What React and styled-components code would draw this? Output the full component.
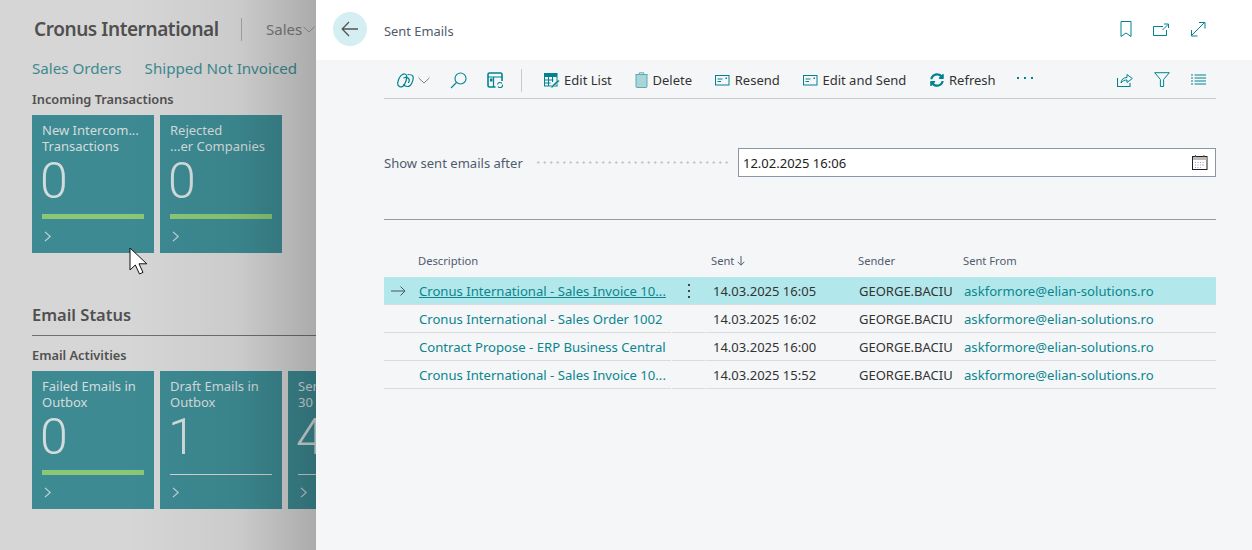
import React from 'react'
import styled, { createGlobalStyle } from 'styled-components'
import { FaSyncAlt } from 'react-icons/fa'

const TEAL = '#00838f'
const FONT = '"Noto Sans", "Open Sans", sans-serif'

const emails = [
    { title: 'Cronus International - Sales Invoice 10...', sent: '14.03.2025 16:05', active: true },
    { title: 'Cronus International - Sales Order 1002', sent: '14.03.2025 16:02' },
    { title: 'Contract Propose - ERP Business Central', sent: '14.03.2025 16:00' },
    { title: 'Cronus International - Sales Invoice 10...', sent: '14.03.2025 15:52' },
]

const Icon = ({ w = 16, h = 16, children }) => (
    <svg width={w} height={h} viewBox={`0 0 ${w} ${h}`} fill="none" stroke={TEAL} strokeWidth="1">
        {children}
    </svg>
)

const MailIcon = () => (
    <Icon w={15} h={11}>
        <rect x=".5" y=".5" width="13.5" height="9.5" />
        <path d="M2.5 4h5M2.5 6.500h3.500" />
        <rect x="10.500" y="2.500" width="1.500" height="1.500" fill={TEAL} stroke="none" />
    </Icon>
)

function Tile({ lines, count, alert }) {
    return (
        <TileBox>
            <TileTitle>
                {lines.map(line => <div key={line}>{line}</div>)}
            </TileTitle>
            <TileCount>{count}</TileCount>
            <TileBar $alert={alert} />
            <TileChevron width="8" height="11" viewBox="0 0 8 11">
                <path d="M1 .8 6.200 5.500 1 10.200" fill="none" stroke="#c9d6d8" strokeWidth="1.100" />
            </TileChevron>
        </TileBox>
    )
}

function App() {
    return (
        <Page>
            <GlobalStyle />
            <RolePane>
                <AppBar>
                    <CompanyName>Cronus International</CompanyName>
                    <AppBarDivider />
                    <AppMenu>Sales</AppMenu>
                    <svg width="12" height="7" viewBox="0 0 12 7">
                        <path d="M.5.800 6 6l5.500-5.200" fill="none" stroke="#9b9b9b" />
                    </svg>
                </AppBar>
                <NavLinks>
                    <span>Sales Orders</span>
                    <span>Shipped Not Invoiced</span>
                </NavLinks>
                <GroupCaption>Incoming Transactions</GroupCaption>
                <TileRow>
                    <Tile lines={['New Intercom...', 'Transactions']} count="0" alert />
                    <Tile lines={['Rejected', '...er Companies']} count="0" alert />
                </TileRow>
                <SectionTitle>Email Status</SectionTitle>
                <SectionRule />
                <GroupCaption>Email Activities</GroupCaption>
                <TileRow>
                    <Tile lines={['Failed Emails in', 'Outbox']} count="0" alert />
                    <Tile lines={['Draft Emails in', 'Outbox']} count="1" />
                    <Tile lines={['Sent Emails Last', '30 Days']} count="4" />
                </TileRow>
                <PaneShade />
                <Cursor width="20" height="28" viewBox="0 0 20 28">
                    <path d="M1 1v22l5.300-5 4.200 9 3.500-1.600-4-8.600h7.800z" fill="#fff" stroke="#111" strokeWidth="1" />
                </Cursor>
            </RolePane>

            <Panel>
                <PanelHeader>
                    <BackButton>
                        <svg width="18" height="16" viewBox="0 0 18 16">
                            <path d="M17 8H1.500M8 1 1.200 8 8 15" fill="none" stroke="#555" strokeWidth="1.300" />
                        </svg>
                    </BackButton>
                    <PanelTitle>Sent Emails</PanelTitle>
                    <HeaderIcons>
                        <Icon w={14} h={16}>
                            <path d="M3 .5h10v15L8 12l-5 3.500z" />
                        </Icon>
                        <Icon w={16} h={13}>
                            <path d="M10 3.500H.5v9h13V7M9.500 7 15 1.500M11 1h4.500v4" />
                        </Icon>
                        <Icon w={16} h={16}>
                            <path d="M1.500 14.500l13-13M9 1.500h6v6M1.500 9v6h6" />
                        </Icon>
                    </HeaderIcons>
                </PanelHeader>

                <PanelBody>
                    <Toolbar>
                        <ToolGroup>
                            <CopilotButton>
                                <Icon w={17} h={15}>
                                    <path d="M5.500 1.500C7 .6 9 .8 9.500 2.500c.5 2-.5 6-2 9-1 2-3.500 3-5 2C.8 12.700.4 10.500 1 8.500 1.600 6 3.500 2.700 5.500 1.500z" strokeWidth="1.200" />
                                    <path d="M10.500 1.500c2 0 4.500 0 5.300 1.500.8 1.700.2 4.500-.8 6.700-1 2.300-3 4-5 3.800-1.600-.2-3-1-3.500-2.500M6.500 5c1.500-.7 4-.5 5 .5 1 1 .8 3-.2 4.500" strokeWidth="1.200" />
                                </Icon>
                                <svg width="12" height="7" viewBox="0 0 12 7">
                                    <path d="M.5.800 6 6l5.500-5.200" fill="none" stroke="#7c8490" />
                                </svg>
                            </CopilotButton>
                            <Icon w={17} h={17}>
                                <circle cx="10.500" cy="6.500" r="5.500" strokeWidth="1.100" />
                                <path d="M6.500 10.500 1 16" strokeWidth="1.100" />
                            </Icon>
                            <Icon w={16} h={16}>
                                <path d="M8.500 15H2.500A1.500 1.500 0 0 1 1 13.500v-11A1.500 1.500 0 0 1 2.500 1h11A1.500 1.500 0 0 1 15 2.500V9" strokeWidth="1.600" />
                                <path d="M1 5h14M6.500 5v10" strokeWidth="1.200" />
                                <rect x="3" y="6.500" width="2.500" height="3" fill={TEAL} stroke="none" />
                                <path d="M10.500 12.500a2.500 2.500 0 0 1 4.500-1M15.500 12.500a2.500 2.500 0 0 1-4.500 2" strokeWidth="1.100" />
                            </Icon>
                        </ToolGroup>
                        <ToolDivider />
                        <ToolButton>
                            <Icon w={16} h={15}>
                                <rect x=".5" y=".5" width="12.500" height="12.500" />
                                <rect x=".5" y=".5" width="12.500" height="3.500" fill={TEAL} stroke="none" />
                                <path d="M.5 7h9M.5 10h6M4.500 4v9M8.500 4v5" />
                                <path d="M6.500 14 14 6.500 15.700 8 8 15.200z" fill={TEAL} stroke="#f5f6f8" strokeWidth=".6" />
                            </Icon>
                            Edit List
                        </ToolButton>
                        <ToolButton>
                            <Icon w={13} h={16}>
                                <path d="M1 2.500h11v12a1 1 0 0 1-1 1H2a1 1 0 0 1-1-1z" fill="#a9d5d9" stroke="#5fa9b0" />
                                <path d="M.5 2.500h12M4.300 2.500V.8h4.400v1.700" stroke="#5fa9b0" />
                            </Icon>
                            Delete
                        </ToolButton>
                        <ToolButton><MailIcon />Resend</ToolButton>
                        <ToolButton><MailIcon />Edit and Send</ToolButton>
                        <ToolButton>
                            <RefreshIcon />
                            Refresh
                        </ToolButton>
                        <MoreDots><i /><i /><i /></MoreDots>
                        <ToolRight>
                            <Icon w={16} h={15}>
                                <path d="M.5 6v8.500h12.500V11" strokeWidth="1.100" />
                                <path d="M4 11c.3-3.500 2.500-5.500 6-5.500V2.500L15.300 6.500 10 10.500V8c-2.500 0-4.500.8-6 3z" />
                            </Icon>
                            <Icon w={16} h={15}>
                                <path d="M.7.700h14.600l-5.700 6.800v7H6.400v-7z" />
                            </Icon>
                            <Icon w={15} h={11}>
                                <path d="M3.500 1H15M3.500 4H15M3.500 7H15M3.500 10H15" />
                                <path d="M0 1h2M0 4h2M0 7h2M0 10h2" />
                            </Icon>
                        </ToolRight>
                    </Toolbar>

                    <FilterRow>
                        <FieldLabel>Show sent emails after</FieldLabel>
                        <FieldLeader />
                        <DateInput>
                            12.02.2025 16:06
                            <svg width="16" height="15" viewBox="0 0 16 15">
                                <rect x=".5" y="1.500" width="14.500" height="13" fill="#fff" stroke="#222" />
                                <rect x="1" y="2" width="13.500" height="3" fill="#bbb" />
                                <path d="M3.500 0v2" stroke="#3a55b0" />
                                <path d="M12 0v2" stroke="#a8392f" />
                                <path d="M3.500 7v1M6 7v1M8.500 7v1M11 7v1M3.500 9.500v1M6 9.500v1M8.500 9.500v1M11 9.500v1M3.500 12v1M6 12v1M8.500 12v1" stroke="#88a8d8" />
                                <path d="M6 7v1M11 9.500v1M8.500 12v1" stroke="#e2a88a" />
                            </svg>
                        </DateInput>
                    </FilterRow>
                    <FilterRule />

                    <GridHead>
                        <span />
                        <HeadCell>Description</HeadCell>
                        <span />
                        <HeadCell $indent>
                            Sent
                            <svg width="8" height="10" viewBox="0 0 8 10">
                                <path d="M4 0v9M.7 5.800 4 9.200l3.300-3.400" fill="none" stroke="#505c6d" />
                            </svg>
                        </HeadCell>
                        <HeadCell>Sender</HeadCell>
                        <HeadCell>Sent From</HeadCell>
                    </GridHead>
                    {emails.map(email => (
                        <GridRow key={email.sent} $active={email.active}>
                            <Cell>
                                {email.active && (
                                    <svg width="15" height="10" viewBox="0 0 15 10">
                                        <path d="M0 5h14M9.500.5 14 5 9.500 9.500" fill="none" stroke="#4a5560" />
                                    </svg>
                                )}
                            </Cell>
                            <LinkCell $underline={email.active}><span>{email.title}</span></LinkCell>
                            <Cell $gap>
                                {email.active && <RowMenu><i /><i /><i /></RowMenu>}
                            </Cell>
                            <Cell $gap>{email.sent}</Cell>
                            <Cell>GEORGE.BACIU</Cell>
                            <LinkCell>askformore@elian-solutions.ro</LinkCell>
                        </GridRow>
                    ))}
                </PanelBody>
            </Panel>
        </Page>
    )
}

export default App

const GlobalStyle = createGlobalStyle`
    html, body {
        margin: 0;
        padding: 0;
        overflow: hidden;
    }
    body {
        font-family: ${FONT};
    }
`

const Page = styled.div`
    display: flex;
    width: 1252px;
    height: 550px;
    overflow: hidden;
`

const RolePane = styled.div`
    position: relative;
    flex: 0 0 316px;
    box-sizing: border-box;
    padding: 17px 0 0 32px;
    overflow: hidden;
    background: #d6d6d6;
`

const PaneShade = styled.div`
    position: absolute;
    inset: 0;
    pointer-events: none;
    background: linear-gradient(to right, rgba(0, 0, 0, 0) 40%, rgba(0, 0, 0, 0.05) 75%, rgba(0, 0, 0, 0.2) 100%);
`

const Cursor = styled.svg`
    position: absolute;
    left: 129px;
    top: 247px;
`

const AppBar = styled.div`
    display: flex;
    align-items: center;
    height: 24px;
    margin-left: 2px;
    white-space: nowrap;
`

const CompanyName = styled.div`
    width: 185px;
    font-size: 19px;
    font-weight: 600;
    color: #505050;
    letter-spacing: -0.42px;
`

const AppBarDivider = styled.div`
    width: 1px;
    height: 23px;
    margin: 0 24px 0 22px;
    background: #a5a5a5;
`

const AppMenu = styled.div`
    font-size: 15px;
    color: #7b7b7b;
    margin-right: 1px;
`

const NavLinks = styled.div`
    display: flex;
    gap: 23px;
    margin-top: 16px;
    padding-bottom: 1px;
    font-size: 15.150px;
    line-height: 22px;
    color: #3d8a92;
    white-space: nowrap;
`

const GroupCaption = styled.div`
    margin-top: 10px;
    font-size: 12.800px;
    line-height: 18px;
    font-weight: 600;
    color: #505050;
`

const TileRow = styled.div`
    display: flex;
    gap: 6px;
    margin-top: 7px;
`

const TileBox = styled.div`
    flex: 0 0 122px;
    box-sizing: border-box;
    height: 138px;
    padding: 7px 10px 0;
    background: #3d8a92;
    color: #d3dcdd;
    overflow: hidden;
`

const TileTitle = styled.div`
    font-size: 13px;
    line-height: 16px;
    white-space: nowrap;
`

const TileCount = styled.div`
    height: 48px;
    margin: 3px 0 0 -2px;
    font-family: Roboto, sans-serif;
    font-size: 50px;
    font-weight: 300;
    line-height: 48px;
`

const TileBar = styled.div`
    display: flex;
    align-items: flex-end;
    height: 5px;
    margin-top: 9px;
    &::after {
        content: '';
        width: 100%;
        height: ${props => (props.$alert ? '5px' : '1px')};
        background: ${props => (props.$alert ? '#8ac776' : '#d3d3d3')};
    }
`

const TileChevron = styled.svg`
    display: block;
    margin: 12px 0 0 2px;
`

const SectionTitle = styled.div`
    margin-top: 50px;
    font-size: 16.500px;
    line-height: 24px;
    font-weight: 600;
    color: #505050;
`

const SectionRule = styled.div`
    height: 1px;
    margin-top: 8px;
    background: #6f6f73;
`

const Panel = styled.div`
    flex: 1;
    display: flex;
    flex-direction: column;
    background: #f5f6f8;
    min-width: 0;
`

const PanelHeader = styled.div`
    display: flex;
    align-items: center;
    height: 60px;
    flex-shrink: 0;
    padding: 0 46px 2px 17px;
    box-sizing: border-box;
    background: #fff;
`

const BackButton = styled.div`
    display: flex;
    align-items: center;
    justify-content: center;
    width: 34px;
    height: 34px;
    border-radius: 50%;
    background: #d5eef1;
`

const PanelTitle = styled.div`
    margin: 4px 0 0 17px;
    font-size: 12.900px;
    color: #505c6d;
`

const HeaderIcons = styled.div`
    display: flex;
    align-items: center;
    gap: 21px;
    margin-left: auto;
`

const PanelBody = styled.div`
    padding: 0 36px 0 68px;
`

const Toolbar = styled.div`
    display: flex;
    align-items: center;
    gap: 23.400px;
    box-sizing: border-box;
    height: 39px;
    padding: 2px 10px 0 13px;
    border-bottom: 1px solid #c8c9cc;
`

const ToolGroup = styled.div`
    display: flex;
    align-items: center;
    gap: 20px;
`

const CopilotButton = styled.div`
    display: flex;
    align-items: center;
    gap: 4px;
`

const ToolDivider = styled.div`
    width: 1px;
    height: 23px;
    margin-left: -5px;
    margin-right: -2px;
    background: #c8c9cc;
`

const ToolButton = styled.div`
    display: flex;
    align-items: center;
    gap: 4.300px;
    font-size: 13px;
    color: #333;
    white-space: nowrap;
`

const RefreshIcon = styled(FaSyncAlt)`
    width: 14px;
    height: 14px;
    margin-right: 1px;
    color: ${TEAL};
`

const MoreDots = styled.div`
    display: flex;
    gap: 5px;
    margin: -4px 0 0 -2px;
    i {
        display: block;
        width: 2px;
        height: 2px;
        background: ${TEAL};
    }
`

const ToolRight = styled.div`
    display: flex;
    align-items: center;
    gap: 21px;
    margin: -2px 0 0 auto;
`

const FilterRow = styled.div`
    display: flex;
    align-items: center;
    margin-top: 49px;
`

const FieldLabel = styled.div`
    flex: 0 0 151px;
    font-size: 13.050px;
    color: #505c6d;
`

const FieldLeader = styled.div`
    flex: 0 0 195px;
    height: 3px;
    margin-right: 8px;
    background-image: radial-gradient(circle at center, #c3c6cb 1px, transparent 1.200px);
    background-size: 6.500px 3px;
`

const DateInput = styled.div`
    flex: 1;
    display: flex;
    align-items: center;
    justify-content: space-between;
    box-sizing: border-box;
    height: 29px;
    padding: 0 7px 0 4px;
    border: 1px solid #8b95a3;
    background: #fff;
    font-size: 13px;
    color: #222;
`

const FilterRule = styled.div`
    height: 1px;
    margin-top: 42px;
    background: #96999e;
`

const GRID_COLUMNS = '34px 253px 34px 153px 105px 1fr'

const GridHead = styled.div`
    display: grid;
    grid-template-columns: ${GRID_COLUMNS};
    align-items: center;
    box-sizing: border-box;
    height: 29px;
    padding-bottom: 4px;
    margin-top: 28px;
`

const HeadCell = styled.div`
    display: flex;
    align-items: center;
    gap: 3px;
    padding-left: ${props => (props.$indent ? '6px' : '0')};
    font-size: 11.200px;
    color: #505c6d;
`

const GridRow = styled.div`
    display: grid;
    grid-template-columns: ${GRID_COLUMNS};
    height: 28px;
    font-size: 13px;
    background: ${props => (props.$active ? '#b2e8eb' : 'transparent')};
`

const Cell = styled.div`
    display: flex;
    align-items: center;
    box-sizing: border-box;
    padding-left: ${props => (props.$gap ? '7px' : '1px')};
    margin-left: ${props => (props.$gap ? '1px' : '0')};
    border-bottom: 1px solid #d9dbde;
    color: #333;
    white-space: nowrap;
    overflow: hidden;
    & > svg {
        margin-left: 6px;
    }
`

const LinkCell = styled(Cell)`
    font-size: 13.120px;
    color: #0b858e;
    span {
        text-decoration: ${props => (props.$underline ? 'underline' : 'none')};
    }
`

const RowMenu = styled.div`
    display: flex;
    flex-direction: column;
    gap: 4px;
    margin-left: 9px;
    i {
        display: block;
        width: 2px;
        height: 2px;
        background: #444;
    }
`
